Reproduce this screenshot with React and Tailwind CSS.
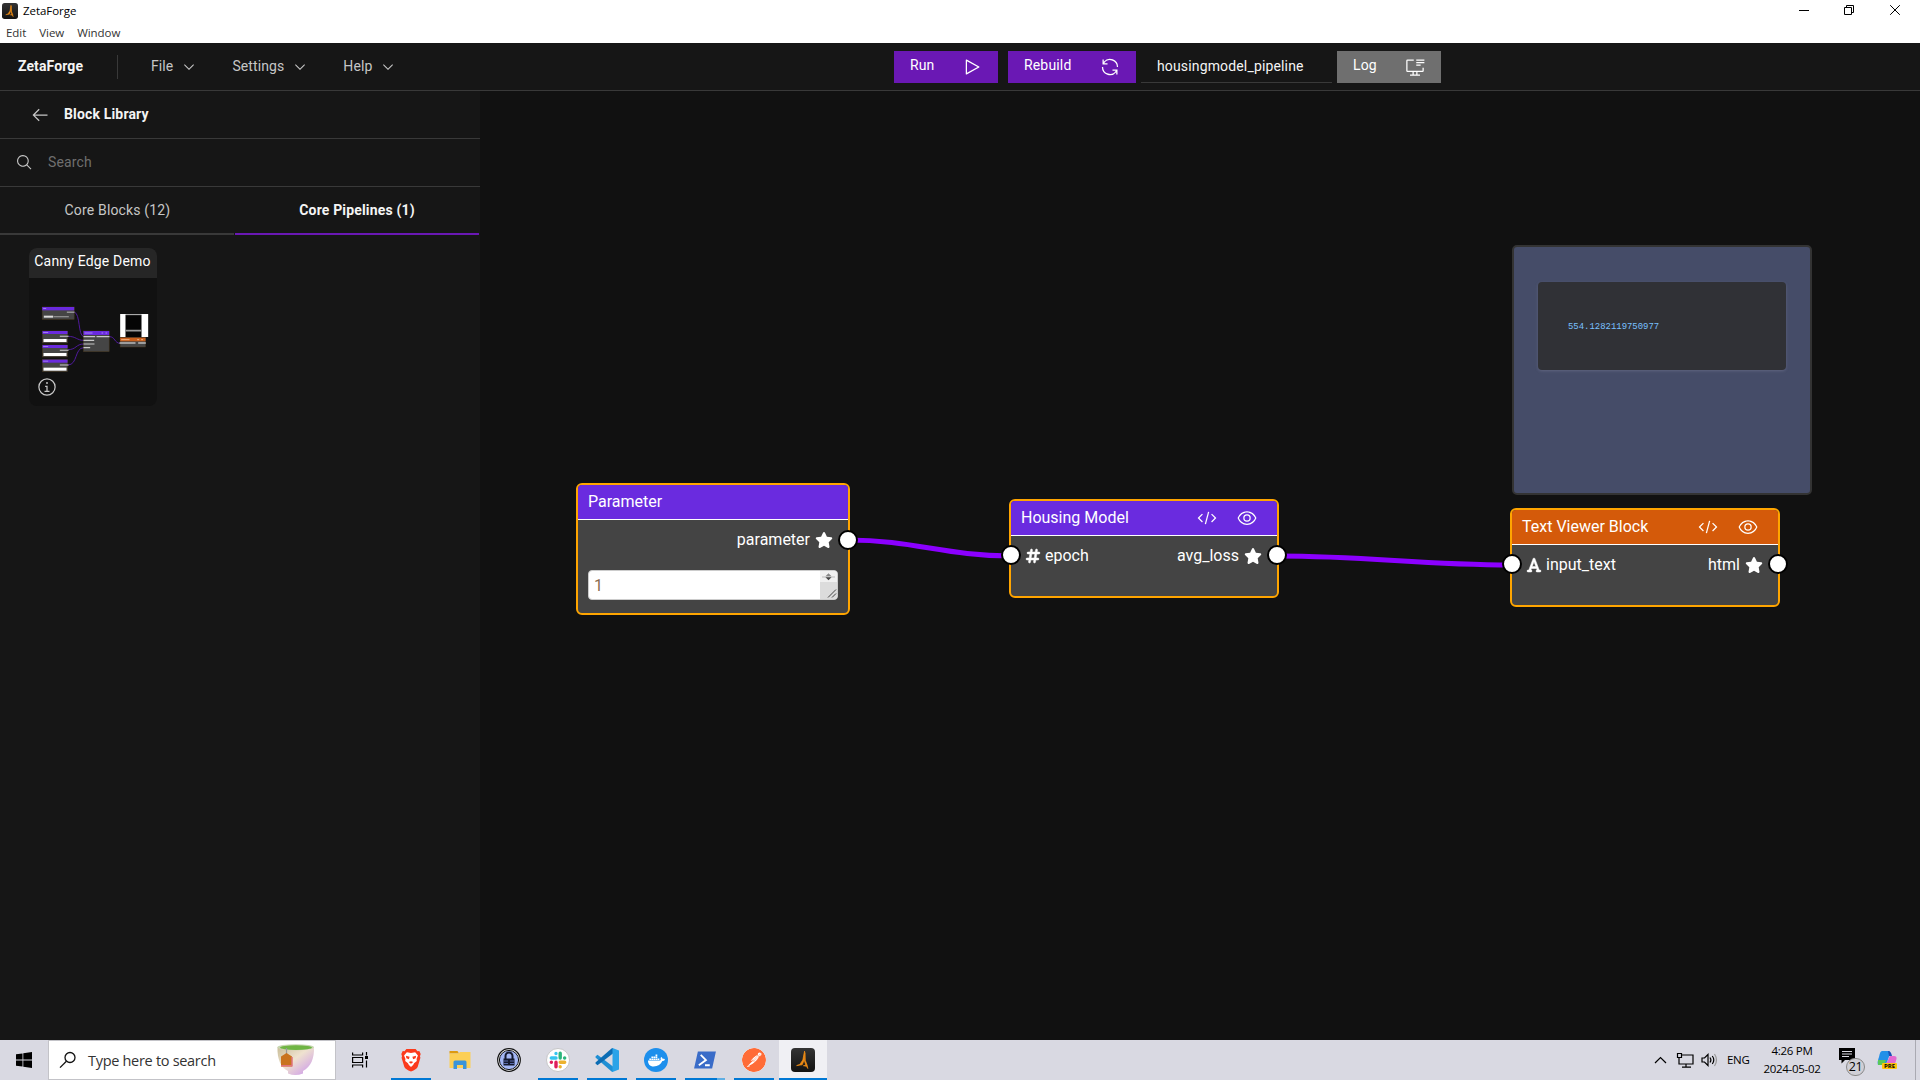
import React from "react";
import { FaStar, FaHashtag, FaFont } from "react-icons/fa6";
import { SiPostman } from "react-icons/si";
import { FaDocker } from "react-icons/fa";

const ICONS = {
  chevron: ["M16 22 6 12l1.4-1.4 8.6 8.6 8.6-8.6L26 12z"],
  back: ["M14 26 15.41 24.59 7.83 17 28 17 28 15 7.83 15 15.41 7.41 14 6 4 16z"],
  search: ["M29,27.5859l-7.5521-7.5521a11.0177,11.0177,0,1,0-1.4141,1.4141L27.5859,29ZM4,13a9,9,0,1,1,9,9A9.01,9.01,0,0,1,4,13Z"],
  play: ["M7,28a1,1,0,0,1-1-1V5a1,1,0,0,1,1.4819-.8763l20,11a1,1,0,0,1,0,1.7525l-20,11A1.0005,1.0005,0,0,1,7,28ZM8,6.6909V25.3088L24.9248,16Z"],
  renew: ["M12 10H6.78A11 11 0 0127 16h2A13 13 0 006 7.68V4H4v8h8zM20 22h5.22A11 11 0 015 16H3a13 13 0 0023 8.32V28h2V20H20z"],
  view: [
    "M30.94,15.66A16.69,16.69,0,0,0,16,5,16.69,16.69,0,0,0,1.06,15.66a1,1,0,0,0,0,.68A16.69,16.69,0,0,0,16,27,16.69,16.69,0,0,0,30.94,16.34,1,1,0,0,0,30.94,15.66ZM16,25c-5.3,0-10.9-3.93-12.93-9C5.1,10.93,10.7,7,16,7s10.9,3.93,12.93,9C26.9,21.07,21.3,25,16,25Z",
    "M16,10a6,6,0,1,0,6,6A6,6,0,0,0,16,10Zm0,10a4,4,0,1,1,4-4A4,4,0,0,1,16,20Z",
  ],
  code: [
    "M31 16L24 23 22.59 21.59 28.17 16 22.59 10.41 24 9 31 16zM1 16L8 9 9.41 10.41 3.83 16 9.41 21.59 8 23 1 16z",
    "M12.42 25.484L17.64 6 19.57 6.517 14.35 26z",
  ],
  info: [
    "M17 22V14H13v2h2v6H12v2h8V22zM16 8a1.5 1.5 0 101.5 1.5A1.5 1.5 0 0016 8z",
    "M16,30A14,14,0,1,1,30,16,14,14,0,0,1,16,30ZM16,4A12,12,0,1,0,28,16,12,12,0,0,0,16,4Z",
  ],
  log: [
    "M28 17v5H4V6h10V4H4A2 2 0 002 6V22a2 2 0 002 2h8v4H8v2H24V28H20V24h8a2 2 0 002-2V17zM18 28H14V24h4z",
    "M18 4h13v2H18zM18 8h13v2H18zM18 12h7v2h-7z",
  ],
};

function Icon({ name, className }) {
  return (
    <svg viewBox="0 0 32 32" fill="currentColor" className={className}>
      {ICONS[name].map((d) => (
        <path key={d} d={d} />
      ))}
    </svg>
  );
}

function ForgeMark({ className }) {
  return (
    <svg viewBox="0 0 24 24" className={className}>
      <defs>
        <linearGradient id="forge" x1="0" y1="0" x2="0" y2="1">
          <stop offset="0" stopColor="#343434" />
          <stop offset="1" stopColor="#121212" />
        </linearGradient>
      </defs>
      <rect width="24" height="24" rx="4" fill="url(#forge)" />
      <path d="M13.6 3 11.8 12l-3 4.4-3.2 1.2 5.6-.8 1.8-4.3zM13.9 4.5l.4 8 1.8 4.6.7 3.4-1.3-2.2-3.1-.6 2.4-.5-1.3-4.2z" fill="#f08c14" stroke="#f08c14" strokeWidth=".7" />
    </svg>
  );
}

function TitleBar() {
  return (
    <div className="h-[43px] bg-white text-black shrink-0 font-['Open_Sans','Noto_Sans',sans-serif]">
      <div className="flex h-[23px] items-start justify-between">
        <div className="flex items-center gap-[5px] pl-0.5 pt-[3px]">
          <ForgeMark className="size-4" />
          <span className="text-[11.5px] leading-4 tracking-[-0.05px]">ZetaForge</span>
        </div>
        <svg viewBox="0 0 160 22" className="h-[22px] w-40" fill="none" stroke="#000">
          <path d="M39 10.5h10M84.500 7.500h7v7h-7zM86.500 7v-1.500h7v7H92M130.200 5.200l9.600 9.600M139.800 5.200l-9.600 9.600" />
        </svg>
      </div>
      <div className="flex h-5 items-center gap-[13px] pl-1.5 text-[11.5px] leading-[18px] tracking-[-0.05px] text-[#333]">
        <span>Edit</span>
        <span>View</span>
        <span>Window</span>
      </div>
    </div>
  );
}

function Menu({ label }) {
  return (
    <div className="flex items-center gap-2 px-4 text-[#c6c6c6]">
      <span>{label}</span>
      <Icon name="chevron" className="size-4 mt-0.5" />
    </div>
  );
}

function Header() {
  return (
    <div className="flex h-12 shrink-0 border-b border-[#393939] bg-[#161616] text-sm tracking-[0.1px]">
      <div className="flex w-[894px] items-center pb-[2px]">
        <span className="w-[99px] pl-[18px] font-bold tracking-[0.1px] text-[#f4f4f4]">ZetaForge</span>
        <span className="ml-[18px] mr-[17px] mt-0.5 h-6 w-px bg-[#393939]" />
        <Menu label="File" />
        <span className="w-[3px]" />
        <Menu label="Settings" />
        <span className="w-[3px]" />
        <Menu label="Help" />
      </div>
      <div className="flex items-center pt-px text-white">
        <div className="flex h-8 w-[104px] justify-between bg-[#6a18b4] pl-4 pr-4">
          <span className="leading-[28px]">Run</span>
          <Icon name="play" className="mt-1.5 size-5" />
        </div>
        <div className="ml-2.5 flex h-8 w-32 justify-between bg-[#6a18b4] pl-4 pr-4">
          <span className="leading-[28px] tracking-[0.16px]">Rebuild</span>
          <Icon name="renew" className="mt-1.5 size-5" />
        </div>
        <div className="ml-[5px] h-8 w-[191px] border-b border-[#393939] pl-4 leading-[31px] tracking-[0.15px] text-[#f4f4f4]">housingmodel_pipeline</div>
        <div className="ml-[5px] flex h-8 w-[104px] justify-between bg-[#6f6f6f] pl-4 pr-4">
          <span className="leading-[28px]">Log</span>
          <Icon name="log" className="mt-1.5 size-5" />
        </div>
      </div>
    </div>
  );
}

const THUMB_INPUTS = [303, 345, 389];

function PipelineThumb() {
  return (
    <svg viewBox="85.5 144 384 384" className="size-32">
      <g fill="none" stroke="#4f1a9c" strokeWidth="3">
        <path d="M221 246C240 250 232 318 250 320M202 319C228 319 228 331 250 331M202 359C228 359 226 342 250 342M202 405C232 405 222 353 250 353M327 320C344 320 342 340 359 340" />
      </g>
      <rect x="125" y="231" width="96" height="37" fill="#454545" stroke="#4a3a20" strokeWidth="1.500" />
      <rect x="125" y="231" width="96" height="10" fill="#6a2ade" />
      <rect x="128" y="234" width="9" height="3" fill="#a07cf0" />
      <rect x="199" y="245" width="23" height="3" fill="#bbb" />
      <rect x="130" y="257" width="28" height="6" fill="#ddd" />
      <rect x="159" y="258" width="46" height="4" fill="#8d8d8d" />
      {THUMB_INPUTS.map((y) => (
        <g key={y}>
          <rect x="126" y={y} width="75" height="36" fill="#454545" stroke="#4a3a20" strokeWidth="1.500" />
          <rect x="126" y={y} width="75" height="9" fill="#6a2ade" />
          <rect x="128" y={y + 3} width="15" height="3" fill="#a07cf0" />
          <rect x="178" y={y + 14} width="26" height="4" fill="#aaa" />
          <rect x="129" y={y + 24} width="69" height="9" fill="#fff" />
        </g>
      ))}
      <rect x="249" y="303" width="77" height="62" fill="#454545" stroke="#4a3a20" strokeWidth="1.500" />
      <rect x="249" y="303" width="77" height="12" fill="#6a2ade" />
      <path d="M252 309h24M303 309h5M315 309h5" stroke="#a98bf5" strokeWidth="3" />
      <path d="M249 320h35M288 320h39M249 331h32M249 342h33M249 353h20" stroke="#c8c8c8" strokeWidth="3.500" />
      <rect x="359" y="252" width="84" height="69" fill="#fff" />
      <rect x="375" y="255" width="48" height="66" fill="#050505" />
      <path d="M375 302h48" stroke="#999" strokeWidth="5" />
      <path d="M375 254h48" stroke="#999" strokeWidth="3" />
      <rect x="359" y="323" width="76" height="28" fill="#454545" stroke="#4a3a20" strokeWidth="1.500" />
      <rect x="359" y="323" width="76" height="11" fill="#c85f1c" />
      <path d="M362 329h25M410 329h6M422 329h6" stroke="#f0b080" strokeWidth="3" />
      <path d="M357 339h48M413 339h23" stroke="#bbb" strokeWidth="4" />
    </svg>
  );
}

function Sidebar() {
  return (
    <div className="flex w-[480px] shrink-0 flex-col bg-[#161616] text-sm">
      <div className="flex h-12 items-center border-b border-[#393939] pl-[30px] font-bold text-[#f4f4f4]">
        <Icon name="back" className="size-5 text-[#c6c6c6]" />
        <span className="pb-[2px] pl-3.5 tracking-[0.16px]">Block Library</span>
      </div>
      <div className="flex h-12 items-center border-b border-[#393939] pl-4 text-[#6f6f6f]">
        <Icon name="search" className="size-[17px] text-[#c6c6c6]" />
        <span className="pb-[2px] pl-[15px] tracking-[0.16px]">Search</span>
      </div>
      <div className="flex h-12 gap-px pr-px text-center leading-[46px]">
        <div className="w-[234px] border-b-2 border-[#393939] pl-px tracking-[0.16px] text-[#c6c6c6]">Core Blocks (12)</div>
        <div className="flex-1 border-b-2 border-[#6a18b4] font-bold tracking-[0.16px] text-[#f4f4f4]">Core Pipelines (1)</div>
      </div>
      <div className="ml-[29px] mt-[13px] w-32 overflow-hidden rounded-lg bg-[#111]">
        <div className="h-[30px] bg-[#262626] pr-px text-center leading-[26px] tracking-[0.18px] text-white whitespace-nowrap">Canny Edge Demo</div>
        <div className="relative size-32">
          <PipelineThumb />
          <Icon name="info" className="absolute bottom-[9px] left-2 size-5 text-[#c6c6c6]" />
        </div>
      </div>
    </div>
  );
}

const handle = "absolute size-5 rounded-full border-2 border-black bg-white";

function Block({ title, place, bar, input, inputIcon: InputIcon, output }) {
  return (
    <div className={"absolute h-[99px] w-[270px] rounded-[6px] border-2 border-[#ffa500] bg-[#444] text-base text-white " + place}>
      <div className={"flex h-[35px] items-center rounded-t-[4px] border-b border-white pl-2.5 " + bar}>
        <span className="flex-1">{title}</span>
        <Icon name="code" className="mr-5 size-5" />
        <Icon name="view" className="mr-5 size-5" />
      </div>
      <div className="relative flex h-[39px] items-center justify-between pl-[14px] pr-[15px]">
        <span className={handle + " -left-2.5 top-[9px]"} />
        <span className="flex items-center gap-1">
          <InputIcon className="size-4 stroke-current stroke-[16]" />
          {input}
        </span>
        <span className="flex items-center gap-[5px]">
          {output}
          <FaStar className="size-[18px]" />
        </span>
        <span className={handle + " -right-2.5 top-[9px]"} />
      </div>
    </div>
  );
}

function Canvas() {
  return (
    <div className="relative flex-1 bg-[#111]">
      <svg className="absolute inset-0 size-full" fill="none" stroke="#8b00ff" strokeWidth="5">
        <path d="M368 449C433 449 466 465 531 465M797 465C891 465 938 474 1032 474" />
      </svg>
      <div className="absolute left-[96px] top-[392px] h-[132px] w-[274px] rounded-[6px] border-2 border-[#ffa500] bg-[#444] text-base text-white">
        <div className="flex h-[35px] items-center rounded-t-[4px] border-b border-white bg-[#6a2bdf] pl-2.5">Parameter</div>
        <div className="relative flex h-10 items-center justify-end gap-[5px] pr-[15px]">
          parameter
          <FaStar className="size-[18px]" />
          <span className={handle + " -right-2.5 top-[10px]"} />
        </div>
        <div className="ml-2.5 mt-2.5 flex h-[30px] w-[250px] overflow-hidden rounded-[4px] border border-[#ccc] bg-white">
          <span className="flex-1 pl-[5px] leading-[29px] text-[#8a6a4c]">1</span>
          <svg viewBox="0 0 17 28" className="h-7 w-[17px]">
            <path d="M0 0h17v11H0z" fill="#f0f0f0" />
            <path d="M0 11h17v17H0z" fill="#dcdcdc" />
            <path d="M2 6h13" stroke="#bbb" />
            <path d="M5.500 5.200 8.500 2.200l3 3z" fill="#888" />
            <path d="M5.500 6.200 8.500 9.200l3-3z" fill="#444" />
            <path d="M8 26.500l8-8M12 26.500l4-4" stroke="#444" fill="none" />
          </svg>
        </div>
      </div>
      <Block title="Housing Model" place="left-[529px] top-[408px]" bar="bg-[#6a2bdf]" input="epoch" inputIcon={FaHashtag} output="avg_loss" />
      <div className="absolute left-[1032px] top-[154px] h-[250px] w-[300px] rounded-[5px] border-2 border-[#333] bg-[#454c68] px-6 pt-[35px]">
        <div className="h-[88px] rounded-sm bg-[#303136] pl-[30px] pt-[38px] font-['Liberation_Mono',monospace] text-[8.95px] leading-[14px] text-[#79c0ff] shadow-[0_1px_3px_rgba(150,150,175,0.35)]">
          554.1282119750977
        </div>
      </div>
      <Block title="Text Viewer Block" place="left-[1030px] top-[417px]" bar="bg-[#d45a0a]" input="input_text" inputIcon={FaFont} output="html" />
    </div>
  );
}

function TaskButton({ children, open, active, grouped }) {
  return (
    <div className={"flex h-10 w-[49px] " + (active ? "pl-px" : "pl-[5px]")}>
      <div className={"flex shrink-0 flex-col items-center " + (active ? "w-12 bg-[#f0f0f4]" : "w-10")}>
        <div className="flex h-[38px] items-center pt-0.5">{children}</div>
        {(open || active) && (
          <div className="flex h-0.5 w-full bg-[#0078d4]">
            {grouped && <span className="ml-auto w-2 bg-[#5faee3]" />}
          </div>
        )}
      </div>
    </div>
  );
}

function Taskbar() {
  return (
    <div className="flex h-10 shrink-0 bg-[#d9d9e2] text-black font-['Open_Sans','Noto_Sans',sans-serif]">
      <div className="flex w-12 items-center justify-center">
        <svg viewBox="0 0 16 16" className="size-4">
          <path d="M0 2.300 6.500 1.400V7.600H0zM7.300 1.300 16 0V7.600H7.300zM0 8.400H6.500V14.600L0 13.700zM7.300 8.400H16V16L7.300 14.700z" />
        </svg>
      </div>
      <div className="flex w-72 items-center border border-[#c3c3c8] bg-white">
        <svg viewBox="0 0 18 18" className="ml-2.5 size-[18px]" fill="none" stroke="#111" strokeWidth="1.300">
          <circle cx="11" cy="6.500" r="5" />
          <path d="M7.400 10.200 1 16.600" />
        </svg>
        <span className="ml-[11px] w-[182px] pt-px text-[14.5px] tracking-[-0.3px] text-[#333]">Type here to search</span>
        <svg viewBox="0 0 40 34" className="ml-1.5 h-[34px] w-10">
          <defs>
            <linearGradient id="cup" x1="0" y1="0" x2="1" y2="1">
              <stop offset="0" stopColor="#c9bd98" />
              <stop offset=".45" stopColor="#efe2cf" />
              <stop offset="1" stopColor="#c890ee" />
            </linearGradient>
          </defs>
          <path d="M1.500 4C1 16 5 25 12 28v2.500q7 3 15 0V28C35 24 38.500 15 38 4z" fill="url(#cup)" />
          <ellipse cx="19.700" cy="4.200" rx="18.200" ry="3" fill="#c6d6b0" />
          <ellipse cx="20" cy="4.600" rx="16" ry="2.300" fill="#6fb544" />
          <path d="M10.500 5v8" stroke="#999" strokeWidth="1.200" />
          <path d="M5 13.500 10.500 10l5.500 3.500v10H5z" fill="#c9731e" />
          <path d="M5 22.700h11V14" fill="none" stroke="#e0737c" strokeWidth="1.500" />
        </svg>
      </div>
      <div className="flex w-[50px] items-center justify-center pr-0.5">
        <svg viewBox="0 0 17 16" className="h-4 w-[17px]" fill="none" stroke="#000" strokeWidth="1.200">
          <path d="M.6.500v2.500h10V.500M.6 15.500V13h10v2.500M.6 5.500h10v5h-10zM14.500 0v3.500M14.500 8.500V15.500" />
          <path d="M13 4h3v3h-3z" fill="#000" stroke="none" />
        </svg>
      </div>
      <TaskButton open>
        <svg viewBox="0 0 22 26" className="h-6 w-[22px]">
          <path d="M6 1h10l2 2.500 2-.2 1.500 3.200-.8 2.500.5 1.500-3 10Q17 23 11 25.500 5 23 3.800 20.500L.8 10.500 1.300 9 .5 6.500 2 3.300l2 .2z" fill="#fb3a1c" />
          <path d="m11 5.500 4.500-1 3 3.500-1.500 4 .3 2-3 2.500-1 2-2.300 2-2.300-2-1-2-3-2.500.3-2-1.500-4 3-3.500z" fill="#fff" />
          <path d="m5.500 8.500 4 1-.8 2.700L6 11zM16.500 8.500l-4 1 .8 2.700L16 11zM8.500 15.300l2.500-1 2.500 1L11 17z" fill="#fb3a1c" />
        </svg>
      </TaskButton>
      <TaskButton>
        <svg viewBox="0 0 22 20" className="h-5 w-[22px]">
          <path d="M.5 1h8l1.500 2.500H.5z" fill="#dd9a10" />
          <path d="M.5 3.500h9L11 2h10.500v16H.5z" fill="#fccf56" />
          <path d="M4.500 18v-6q0-1.500 1.500-1.500h10q1.500 0 1.500 1.500v7h-3.500v-4H8v4H4.500z" fill="#3a94d8" />
        </svg>
      </TaskButton>
      <TaskButton>
        <svg viewBox="0 0 24 24" className="size-6">
          <circle cx="12" cy="12" r="11.300" fill="#fff" stroke="#111" strokeWidth="1.200" />
          <circle cx="12" cy="12" r="9.600" fill="#a3b6f4" stroke="#111" strokeWidth="1" />
          <path d="M8.500 11V8a3.500 3.500 0 0 1 7 0v3" fill="none" stroke="#151a30" strokeWidth="2" />
          <path d="M6.500 10.500h11v7h-11z" fill="#151a30" />
          <path d="M7 13h4M13 13h4M7 15.500h4M13 15.500h4" stroke="#6a7fc8" strokeWidth=".8" />
        </svg>
      </TaskButton>
      <TaskButton open>
        <svg viewBox="0 0 24 24" className="size-6">
          <circle cx="12" cy="12" r="11.500" fill="#fff" stroke="#bbb" strokeWidth=".8" />
          <g strokeWidth="3.400" strokeLinecap="round" fill="none">
            <path d="M10 5.500v.1M5.300 10H10" stroke="#36c5f0" />
            <path d="M18.600 10h.1M14.200 5.300V10" stroke="#2eb67d" />
            <path d="M14.200 18.700v.1M14.200 14.200h4.500" stroke="#ecb22e" />
            <path d="M5.300 14.200h.1M10 14.200v4.500" stroke="#e01e5a" />
          </g>
        </svg>
      </TaskButton>
      <TaskButton open>
        <svg viewBox="0 0 24 24" className="size-6">
          <path d="M.5 8.500 2.500 6.800 18 18.500V24L16.500 23.500.5 9.500z" fill="#1f8fd4" />
          <path d="M.5 15.500 2.500 17.200 18 5.500V0L16.500.5.500 14.500z" fill="#0b6cb4" />
          <path d="M17.500 0 24 2.500v19L17.500 24z" fill="#2aa3e8" />
        </svg>
      </TaskButton>
      <TaskButton open>
        <span className="flex size-6 items-center justify-center rounded-full bg-[#1d8fec]">
          <FaDocker className="size-[17px] text-white" />
        </span>
      </TaskButton>
      <TaskButton open grouped>
        <svg viewBox="0 0 24 20" className="h-[19px] w-6">
          <path d="M4.500.5H23.500L19.500 18.500H.5z" fill="#3a6cc8" />
          <path d="M7.500 4 13 9.500 5.500 15M12 15h5" fill="none" stroke="#fff" strokeWidth="1.900" />
        </svg>
      </TaskButton>
      <TaskButton open>
        <SiPostman className="size-6 rounded-full bg-white text-[#ff6c37]" />
      </TaskButton>
      <TaskButton active>
        <ForgeMark className="size-6" />
      </TaskButton>
      <div className="ml-auto flex items-center text-[11.5px]">
        <svg viewBox="0 0 64 20" className="mr-[9px] h-5 w-16" fill="none" stroke="#000" strokeWidth="1.200">
          <path d="M1 13 6.500 7.500 12 13" />
          <path d="M27 5h12v9H25v-3M23.500 3.500h4v4h-4zM25 8v3M32 14v3M28 17.200h9" />
          <path d="M48 8h2.500L54 4.500v11L50.500 12H48zM56 7.500q1.800 2.500 0 5M58.300 6q3 4 0 8" />
          <path d="M60.500 4q4 6 0 12" stroke="#999" />
        </svg>
        <span className="w-[22px] tracking-[-0.3px]">ENG</span>
        <div className="ml-[13px] w-[60px] pb-px text-center leading-[18px] whitespace-nowrap tracking-[-0.3px]">
          <div>4:26 PM</div>
          <div>2024-05-02</div>
        </div>
        <div className="relative ml-[17px] h-6 w-[26px]">
          <svg viewBox="0 0 17 16" className="h-4 w-[17px]">
            <path d="M0 0h16v12H6l-3.500 3.500V12H0z" />
            <path d="M3 3.500h10M3 6h10M3 8.500h7" stroke="#d9d9e2" />
          </svg>
          <span className="absolute -bottom-1 left-[7px] flex h-[18px] w-[19px] items-center justify-center rounded-full border border-[#888] bg-[#cfcfd6] text-[12.5px] leading-none tracking-[-0.5px]">21</span>
        </div>
        <svg viewBox="0 0 20 20" className="ml-3 size-5">
          <path d="M5 1h6q3 0 2 3l-3 8q-1 3-4 3H1q-1-3 1-8Q3 1 5 1z" fill="#2390e8" />
          <path d="M1 10h8l-2 5H1z" fill="#58c85a" />
          <path d="M13 6h4q3 0 2.500 3l-1.500 5H9l3-6q.500-2 1-2z" fill="#e36ad0" />
          <path d="M11 1q3 0 4 5h-3z" fill="#1b50b8" />
          <rect x="5" y="13" width="15" height="6" rx="1" fill="#ffc40c" />
          <text x="12.500" y="18.200" fontSize="6" fontWeight="700" textAnchor="middle">PRE</text>
        </svg>
        <span className="ml-[18px] h-10 w-px bg-[#aaaab2]" />
        <span className="w-1" />
      </div>
    </div>
  );
}

export default function App() {
  return (
    <div className="flex h-[1080px] w-[1920px] flex-col overflow-hidden bg-[#111] font-['Roboto',sans-serif]">
      <TitleBar />
      <Header />
      <div className="flex min-h-0 flex-1">
        <Sidebar />
        <Canvas />
      </div>
      <Taskbar />
    </div>
  );
}
